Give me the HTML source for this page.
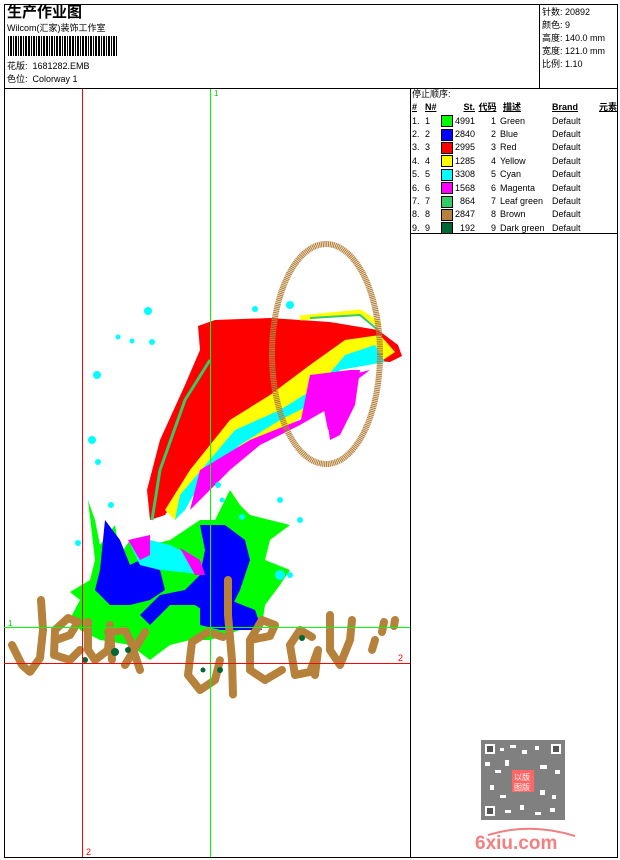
<!DOCTYPE html>
<html><head><meta charset="utf-8"><style>
body{margin:0;width:620px;height:860px;background:#fff;position:relative;overflow:hidden;font-family:"Liberation Sans","Noto Sans CJK SC",sans-serif;color:#000}
.a{position:absolute;white-space:nowrap;font-size:9px;line-height:11px}
table{border-collapse:collapse;font-size:9px;table-layout:fixed}
td{padding:0;height:13.4px;line-height:13px;white-space:nowrap;overflow:hidden}
.sw{display:inline-block;width:10px;height:10px;border:1px solid #000;vertical-align:middle}
</style></head><body>
<svg width="620" height="860" style="position:absolute;left:0;top:0">
<rect x="4.5" y="4.5" width="613" height="853" fill="none" stroke="#000"/>
<line x1="4" y1="88.5" x2="618" y2="88.5" stroke="#000"/>
<line x1="539.5" y1="4" x2="539.5" y2="88" stroke="#000"/>
<line x1="410.5" y1="88" x2="410.5" y2="858" stroke="#000"/>
<line x1="410" y1="233.5" x2="618" y2="233.5" stroke="#000"/>
<g fill="#000">
<rect x="8" y="36" width="1" height="20"/><rect x="10" y="36" width="2" height="20"/><rect x="13" y="36" width="1" height="20"/><rect x="15" y="36" width="2" height="20"/><rect x="18" y="36" width="1" height="20"/><rect x="20" y="36" width="2" height="20"/><rect x="23" y="36" width="1" height="20"/><rect x="25" y="36" width="2" height="20"/><rect x="28" y="36" width="2" height="20"/><rect x="31" y="36" width="1" height="20"/><rect x="33" y="36" width="2" height="20"/><rect x="36" y="36" width="1" height="20"/><rect x="38" y="36" width="2" height="20"/><rect x="41" y="36" width="1" height="20"/><rect x="43" y="36" width="2" height="20"/><rect x="46" y="36" width="2" height="20"/><rect x="49" y="36" width="1" height="20"/><rect x="51" y="36" width="2" height="20"/><rect x="54" y="36" width="1" height="20"/><rect x="56" y="36" width="2" height="20"/><rect x="59" y="36" width="2" height="20"/><rect x="62" y="36" width="1" height="20"/><rect x="64" y="36" width="2" height="20"/><rect x="67" y="36" width="1" height="20"/><rect x="69" y="36" width="2" height="20"/><rect x="72" y="36" width="2" height="20"/><rect x="75" y="36" width="1" height="20"/><rect x="77" y="36" width="2" height="20"/><rect x="80" y="36" width="1" height="20"/><rect x="82" y="36" width="2" height="20"/><rect x="85" y="36" width="2" height="20"/><rect x="88" y="36" width="1" height="20"/><rect x="90" y="36" width="2" height="20"/><rect x="93" y="36" width="1" height="20"/><rect x="95" y="36" width="2" height="20"/><rect x="98" y="36" width="2" height="20"/><rect x="101" y="36" width="1" height="20"/><rect x="103" y="36" width="2" height="20"/><rect x="106" y="36" width="1" height="20"/><rect x="108" y="36" width="2" height="20"/><rect x="111" y="36" width="1" height="20"/><rect x="113" y="36" width="2" height="20"/><rect x="116" y="36" width="1" height="20"/>
</g>
<!-- dolphin -->
<path d="M198,326 L215,320 L270,318 L330,322 L378,330 L398,345 L402,356 L390,362 L360,360 L320,370 L280,395 L240,420 L210,450 L185,485 L165,515 L150,520 L147,490 L160,440 L185,385 L200,350 Z" fill="#f00"/>
<path d="M230,420 L270,395 L310,365 L345,340 L380,335 L395,352 L380,362 L350,360 L330,380 L320,405 L290,425 L250,445 L215,470 L190,500 L175,520 L165,510 L190,470 Z" fill="#ff0"/>
<path d="M235,430 L280,410 L320,385 L345,355 L375,345 L385,362 L340,370 L320,400 L280,420 L240,445 L205,475 L185,510 L175,520 L180,495 Z" fill="#0ff"/>
<path d="M250,440 L300,420 L330,400 L350,375 L370,370 L350,385 L352,405 L340,420 L328,430 L322,400 L300,425 L260,445 L230,470 L200,500 L190,510 L200,470 Z" fill="#f0f"/>
<path d="M310,375 L350,370 L360,370 L355,405 L340,435 L330,440 L326,410 L300,425 Z" fill="#f0f"/>
<path d="M152,520 L160,470 L185,400 L210,360" fill="none" stroke="#3c6" stroke-width="3"/>
<path d="M300,318 L360,312 L380,325" fill="none" stroke="#ff0" stroke-width="5"/>
<path d="M310,318 L360,315 L378,330" fill="none" stroke="#3c6" stroke-width="2"/>
<ellipse cx="326" cy="354" rx="54" ry="110" fill="none" stroke="#b5813b" stroke-width="6" stroke-dasharray="1.2 0.6"/>
<!-- splash -->
<path d="M88,500 L95,520 L100,545 L115,525 L120,555 L130,540 L150,545 L170,540 L185,530 L200,520 L215,520 L230,490 L240,505 L250,515 L270,520 L290,525 L270,540 L265,560 L290,570 L280,585 L265,605 L262,625 L240,630 L210,640 L190,640 L170,645 L150,660 L130,645 L100,640 L80,630 L72,615 L80,600 L70,592 L90,580 L95,560 Z" fill="#0f0"/>
<path d="M105,520 L120,540 L130,565 L140,560 L160,570 L165,590 L150,600 L130,605 L110,605 L95,590 L100,570 Z" fill="#00f"/>
<path d="M200,525 L225,525 L245,540 L250,560 L240,590 L230,610 L210,615 L195,605 L170,605 L150,625 L140,615 L160,595 L185,590 L200,575 L205,550 Z" fill="#00f"/>
<path d="M200,600 L230,600 L255,610 L262,630 L240,630 L220,630 L200,625 Z" fill="#00f"/>
<path d="M128,540 L150,540 L170,545 L200,560 L205,575 L180,572 L160,570 L140,565 Z" fill="#0ff"/>
<path d="M128,540 L150,535 L150,555 L140,560 Z" fill="#f0f"/>
<path d="M180,548 L200,560 L205,575 L195,575 Z" fill="#f0f"/>
<g fill="#0ff">
<circle cx="148" cy="311" r="4"/><circle cx="118" cy="337" r="2.5"/><circle cx="132" cy="341" r="2.5"/><circle cx="152" cy="342" r="3"/><circle cx="97" cy="375" r="4"/><circle cx="92" cy="440" r="4"/><circle cx="98" cy="462" r="3"/><circle cx="255" cy="309" r="3"/><circle cx="290" cy="305" r="4"/><circle cx="218" cy="485" r="3"/><circle cx="222" cy="500" r="2.5"/><circle cx="280" cy="500" r="3"/><circle cx="242" cy="517" r="3"/><circle cx="300" cy="520" r="3"/><circle cx="280" cy="575" r="5"/><circle cx="290" cy="575" r="3"/><circle cx="111" cy="505" r="3"/><circle cx="78" cy="543" r="3"/></g>
<!-- text Jeux d'eau -->
<g fill="none" stroke="#b5813b" stroke-width="8" stroke-linecap="round" stroke-linejoin="round" stroke-dasharray="1.3 0.5">
<path d="M41,600 L43,630 L40,658 L30,672 L22,665 L12,645"/>
<path d="M56,640 L70,635 L78,622 L68,618 L55,630 L54,655 L70,660 L80,650"/>
<path d="M88,622 L88,650 L95,660 L108,650 L110,625 L112,660"/>
<path d="M108,632 L125,630 L130,640 L140,670"/>
<path d="M145,632 L125,665"/>
<path d="M223,637 L208,632 L192,642 L188,675 L200,690 L215,680 L220,660"/>
<path d="M228,580 L228,615 L232,660 L233,695"/>
<path d="M250,640 L270,636 L275,625 L262,620 L250,640 L250,670 L265,680 L282,670"/>
<path d="M312,637 L300,630 L290,645 L295,675 L310,672 L318,650 L315,675"/>
<path d="M330,615 L330,650 L340,665 L350,640 L352,620"/>
<path d="M375,640 L372,650"/><path d="M384,622 L382,632"/><path d="M395,620 L394,626"/>
</g>
<g fill="#006633"><circle cx="85" cy="660" r="3"/><circle cx="115" cy="652" r="4"/><circle cx="128" cy="650" r="3"/><circle cx="203" cy="670" r="2.5"/><circle cx="220" cy="670" r="3"/><circle cx="302" cy="638" r="3"/></g>
<!-- guide lines -->
<line x1="82.5" y1="89" x2="82.5" y2="857" stroke="#f00"/>
<line x1="210.5" y1="89" x2="210.5" y2="857" stroke="#0f0"/>
<line x1="4" y1="627.5" x2="410" y2="627.5" stroke="#0f0"/>
<line x1="4" y1="663.5" x2="410" y2="663.5" stroke="#f00"/>
<text x="214" y="96" font-size="8" fill="#0c0" font-family="Liberation Sans">1</text>
<text x="8" y="626" font-size="8" fill="#0c0" font-family="Liberation Sans">1</text>
<text x="398" y="661" font-size="9" fill="#f00" font-family="Liberation Sans">2</text>
<text x="86" y="855" font-size="9" fill="#f00" font-family="Liberation Sans">2</text>
<!-- QR -->
<rect x="481" y="740" width="84" height="80" fill="#555" opacity=".75"/>
<g fill="#fff">
<rect x="485" y="744" width="10" height="10"/><rect x="551" y="744" width="10" height="10"/><rect x="485" y="806" width="10" height="10"/>
<rect x="500" y="748" width="4" height="3"/><rect x="510" y="745" width="6" height="3"/><rect x="522" y="750" width="5" height="4"/><rect x="535" y="746" width="4" height="4"/>
<rect x="485" y="762" width="5" height="4"/><rect x="495" y="770" width="6" height="3"/><rect x="505" y="760" width="4" height="6"/><rect x="540" y="765" width="7" height="4"/><rect x="555" y="770" width="5" height="4"/>
<rect x="490" y="785" width="4" height="5"/><rect x="500" y="795" width="6" height="3"/><rect x="540" y="790" width="5" height="5"/><rect x="552" y="795" width="4" height="4"/>
<rect x="505" y="810" width="6" height="3"/><rect x="520" y="805" width="4" height="5"/><rect x="535" y="812" width="6" height="3"/><rect x="550" y="808" width="5" height="4"/>
</g>
<g fill="#555"><rect x="487" y="746" width="6" height="6"/><rect x="553" y="746" width="6" height="6"/><rect x="487" y="808" width="6" height="6"/></g>
<rect x="512" y="770" width="22" height="22" fill="#f66"/>
<text x="514" y="780" font-size="8" fill="#fff" font-family="Noto Sans CJK SC">以版</text>
<text x="514" y="790" font-size="8" fill="#fff" font-family="Noto Sans CJK SC">图版</text>
<path d="M488,835 Q530,822 575,836" fill="none" stroke="#f08080" stroke-width="2"/>
<text x="475" y="849" font-size="19" font-weight="bold" fill="#f28080" font-family="Liberation Sans">6xiu.com</text>
</svg>
<div class="a" style="left:7px;top:4px;font-size:15px;line-height:17px;font-weight:bold">生产作业图</div>
<div class="a" style="left:7px;top:23px">Wilcom(汇家)装饰工作室</div>
<div class="a" style="left:7px;top:61px">花版:&nbsp; 1681282.EMB</div>
<div class="a" style="left:7px;top:74px">色位:&nbsp; Colorway 1</div>
<div class="a" style="left:542px;top:6px;line-height:13px">针数: 20892<br>颜色: 9<br>高度: 140.0 mm<br>宽度: 121.0 mm<br>比例: 1.10</div>
<div class="a" style="left:412px;top:89px">停止顺序:</div>
<table style="position:absolute;left:412px;top:101px;width:205px">
<colgroup><col style="width:13px"><col style="width:16px"><col style="width:34px"><col style="width:25px"><col style="width:52px"><col style="width:35px"><col style="width:30px"></colgroup>
<tr style="font-weight:bold;text-decoration:underline"><td>#</td><td>N#</td><td style="text-align:right">St.</td><td style="text-align:center">代码</td><td style="padding-left:3px">描述</td><td>Brand</td><td style="text-align:right">元素</td></tr>
<tr><td>1.</td><td>1</td><td><span class="sw" style="background:#0f0"></span><span style="float:right">4991</span></td><td style="text-align:right;padding-right:4px">1</td><td>Green</td><td>Default</td><td></td></tr>
<tr><td>2.</td><td>2</td><td><span class="sw" style="background:#00f"></span><span style="float:right">2840</span></td><td style="text-align:right;padding-right:4px">2</td><td>Blue</td><td>Default</td><td></td></tr>
<tr><td>3.</td><td>3</td><td><span class="sw" style="background:#f00"></span><span style="float:right">2995</span></td><td style="text-align:right;padding-right:4px">3</td><td>Red</td><td>Default</td><td></td></tr>
<tr><td>4.</td><td>4</td><td><span class="sw" style="background:#ff0"></span><span style="float:right">1285</span></td><td style="text-align:right;padding-right:4px">4</td><td>Yellow</td><td>Default</td><td></td></tr>
<tr><td>5.</td><td>5</td><td><span class="sw" style="background:#0ff"></span><span style="float:right">3308</span></td><td style="text-align:right;padding-right:4px">5</td><td>Cyan</td><td>Default</td><td></td></tr>
<tr><td>6.</td><td>6</td><td><span class="sw" style="background:#f0f"></span><span style="float:right">1568</span></td><td style="text-align:right;padding-right:4px">6</td><td>Magenta</td><td>Default</td><td></td></tr>
<tr><td>7.</td><td>7</td><td><span class="sw" style="background:#3c6"></span><span style="float:right">864</span></td><td style="text-align:right;padding-right:4px">7</td><td>Leaf green</td><td>Default</td><td></td></tr>
<tr><td>8.</td><td>8</td><td><span class="sw" style="background:#b5813b"></span><span style="float:right">2847</span></td><td style="text-align:right;padding-right:4px">8</td><td>Brown</td><td>Default</td><td></td></tr>
<tr><td>9.</td><td>9</td><td><span class="sw" style="background:#063"></span><span style="float:right">192</span></td><td style="text-align:right;padding-right:4px">9</td><td>Dark green</td><td>Default</td><td></td></tr>
</table>
</body></html>
